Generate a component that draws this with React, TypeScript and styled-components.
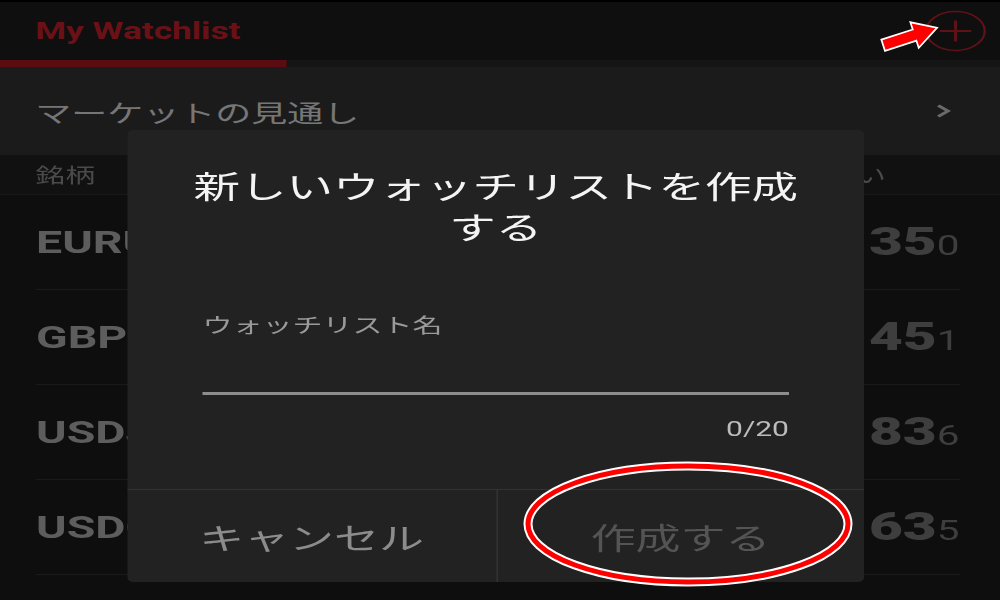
import React from 'react';
import styled, { createGlobalStyle } from 'styled-components';

// the reference is a phone capture stretched sideways, so the page is laid
// out at 2/3 width and widened by a scaleX on the stage
const STRETCH = 1.5;
const PAGE_WIDTH = 1000 / STRETCH;

interface Quote {
  symbol: string;
  big: string;
  tail: string;
}

const quotes: Quote[] = [
  { symbol: 'EURUSD', big: '35', tail: '0' },
  { symbol: 'GBPUSD', big: '45', tail: '1' },
  { symbol: 'USDJPY', big: '83', tail: '6' },
  { symbol: 'USDCAD', big: '63', tail: '5' },
];

const GlobalStyle = createGlobalStyle`
  html, body {
    margin: 0;
    padding: 0;
    background: #0e0e0e;
  }
  body {
    font-family: Roboto, "Noto Sans CJK JP", sans-serif;
  }
`;

const Viewport = styled.div`
  position: relative;
  width: 1000px;
  height: 600px;
  overflow: hidden;
  background: #0e0e0e;
`;

const Stage = styled.div`
  position: relative;
  width: ${PAGE_WIDTH}px;
  height: 600px;
  transform: scaleX(${STRETCH});
  transform-origin: 0 0;
  display: flex;
  flex-direction: column;
  border-top: 2px solid #000;
  box-sizing: border-box;
`;

const Header = styled.header`
  height: 58px;
  display: flex;
  align-items: center;
  justify-content: space-between;
  padding: 0 8px 0 23.5px;
  background: #0f0f0f;
`;

const HeaderTitle = styled.h1`
  margin: 0;
  font-family: Roboto, sans-serif;
  font-weight: 700;
  font-size: 23.5px;
  color: #6a1117;
`;

const AddButton = styled.button`
  border: 0;
  padding: 0;
  background: none;
  display: flex;
  color: #5e1217;
`;

const TabTrack = styled.div`
  height: 7px;
  background: #151515;
`;

const TabIndicator = styled.div`
  width: 191px;
  height: 100%;
  background: #5a0c11;
`;

const MarketRow = styled.div`
  height: 88px;
  display: flex;
  align-items: center;
  justify-content: space-between;
  padding: 0 33px 0 23.5px;
  background: #1b1b1b;
  font-family: "Noto Sans CJK JP", sans-serif;
  font-size: 24px;
  color: #767676;
`;

const ColumnHeader = styled.div`
  height: 40px;
  display: flex;
  align-items: center;
  justify-content: space-between;
  padding: 0 76px 0 23.5px;
  background: #111;
  border-bottom: 1px solid #181818;
  box-sizing: border-box;
  font-family: "Noto Sans CJK JP", sans-serif;
  font-size: 20px;
  color: #4a4a4a;
`;

const QuoteList = styled.div`
  display: flex;
  flex-direction: column;
`;

const QuoteRow = styled.div`
  height: 95px;
  margin: 0 27px 0 24px;
  display: flex;
  align-items: center;
  justify-content: space-between;
  border-bottom: 1px solid #1a1a1a;
  box-sizing: border-box;
`;

const Symbol = styled.span`
  font-family: Roboto, sans-serif;
  font-weight: 700;
  font-size: 31px;
  color: #5d5d5d;
`;

const Price = styled.span`
  display: flex;
  align-items: baseline;
  font-family: Roboto, sans-serif;
  color: #3e3e3e;
`;

const PricePart = styled.span<{ $size: number; $bold?: boolean }>`
  font-size: ${(p) => p.$size}px;
  font-weight: ${(p) => (p.$bold ? 900 : 400)};
`;

const Dialog = styled.div`
  position: absolute;
  left: 85px;
  top: 128px;
  width: 491px;
  height: 452px;
  display: flex;
  flex-direction: column;
  background: #222;
  border-radius: 4px;
  font-family: "Noto Sans CJK JP", sans-serif;
`;

const DialogTitle = styled.h2`
  margin: 0;
  padding: 34px 36px 0;
  font-size: 31px;
  line-height: 41px;
  font-weight: 400;
  text-align: center;
  color: #f4f4f4;
`;

const Field = styled.div`
  margin: 65px 50px 0;
  display: flex;
  flex-direction: column;
`;

const FieldLabel = styled.label`
  font-size: 20px;
  line-height: 28px;
  color: #9a9a9a;
`;

const FieldLine = styled.div`
  margin-top: 53px;
  height: 3px;
  background: #8d8d8d;
`;

const Counter = styled.div`
  margin-top: 20px;
  text-align: right;
  font-family: Roboto, sans-serif;
  font-size: 20px;
  line-height: 28px;
  color: #bcbcbc;
`;

const ButtonBar = styled.div`
  margin-top: auto;
  height: 92px;
  display: grid;
  grid-template-columns: 1fr 1fr;
  border-top: 1px solid #333;
`;

const DialogButton = styled.button<{ $muted?: boolean }>`
  border: 0;
  background: none;
  padding: 0;
  font-family: "Noto Sans CJK JP", sans-serif;
  font-size: 30px;
  color: ${(p) => (p.$muted ? '#545454' : '#8c8c8c')};
  & + & {
    border-left: 1px solid #333;
  }
`;

const Marks = styled.svg`
  position: absolute;
  left: 0;
  top: 0;
  pointer-events: none;
`;

const Chevron = () => (
  <svg width="10" height="14" viewBox="0 0 10 14">
    <polyline points="1.5,1.5 8,7 1.5,12.5" fill="none" stroke="#6a6a6a" strokeWidth="2.6" />
  </svg>
);

const PlusCircle = () => (
  <svg width="44" height="44" viewBox="0 0 44 44">
    <circle cx="22" cy="22" r="19.5" fill="none" stroke="currentColor" strokeWidth="1.6" />
    <path d="M11.5 22h21M22 11.5v21" stroke="currentColor" strokeWidth="2" />
  </svg>
);

export default function App() {
  return (
    <>
      <GlobalStyle />
      <Viewport>
        <Stage>
          <Header>
            <HeaderTitle>My Watchlist</HeaderTitle>
            <AddButton aria-label="add">
              <PlusCircle />
            </AddButton>
          </Header>
          <TabTrack>
            <TabIndicator />
          </TabTrack>
          <MarketRow>
            <span>マーケットの見通し</span>
            <Chevron />
          </MarketRow>
          <ColumnHeader>
            <span>銘柄</span>
            <span>買い</span>
          </ColumnHeader>
          <QuoteList>
            {quotes.map((q) => (
              <QuoteRow key={q.symbol}>
                <Symbol>{q.symbol}</Symbol>
                <Price>
                  <PricePart $size={39} $bold>
                    {q.big}
                  </PricePart>
                  <PricePart $size={27}>{q.tail}</PricePart>
                </Price>
              </QuoteRow>
            ))}
          </QuoteList>

          <Dialog role="dialog">
            <DialogTitle>新しいウォッチリストを作成する</DialogTitle>
            <Field>
              <FieldLabel>ウォッチリスト名</FieldLabel>
              <FieldLine />
              <Counter>0/20</Counter>
            </Field>
            <ButtonBar>
              <DialogButton>キャンセル</DialogButton>
              <DialogButton $muted>作成する</DialogButton>
            </ButtonBar>
          </Dialog>
        </Stage>

        <Marks width="1000" height="600" viewBox="0 0 1000 600">
          <ellipse cx="688" cy="524" rx="160" ry="58" fill="none" stroke="#fff" strokeWidth="9" />
          <ellipse cx="688" cy="524" rx="160" ry="58" fill="none" stroke="#f00" strokeWidth="5" />
          <g transform="translate(884 45) rotate(-18)">
            <polygon
              points="0,-5 33,-5 33,-12 54,0 33,12 33,5 0,5"
              fill="#f00"
              stroke="#fff"
              strokeWidth="3.5"
              strokeLinejoin="miter"
              paintOrder="stroke"
            />
          </g>
        </Marks>
      </Viewport>
    </>
  );
}
